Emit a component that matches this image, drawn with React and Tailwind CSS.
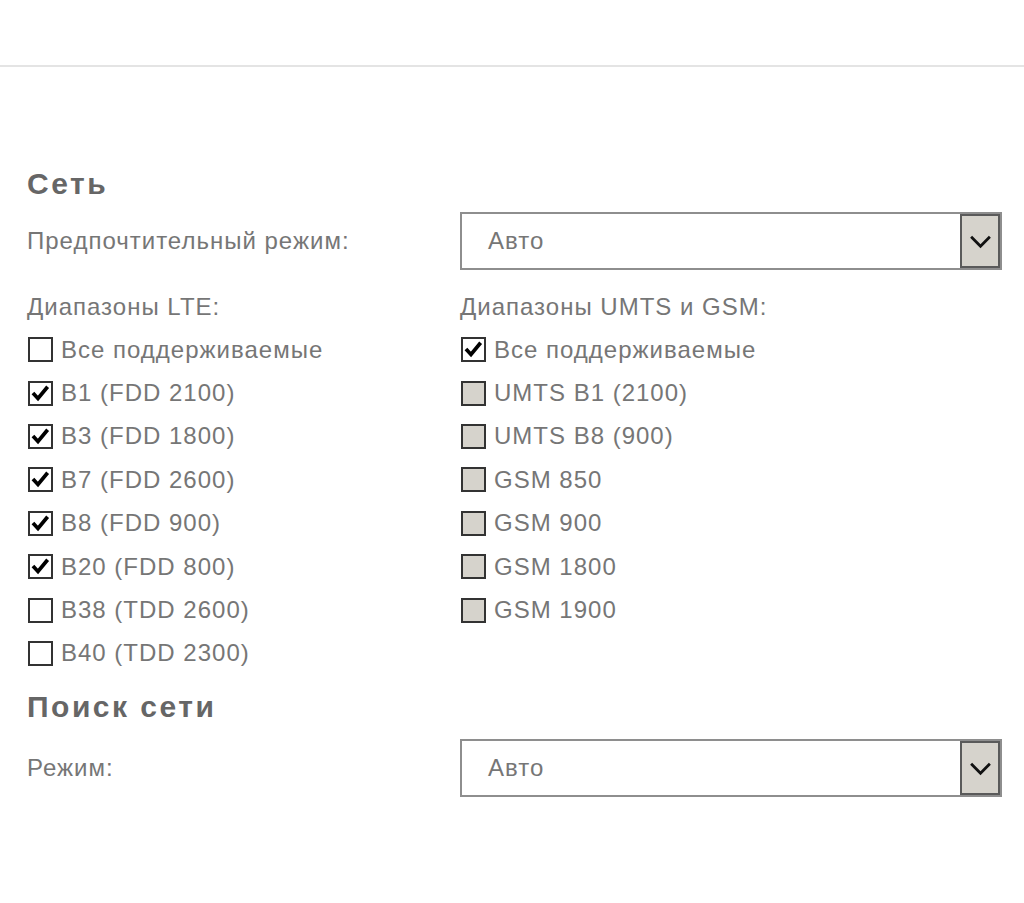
import React from 'react';

const font = "font-[family-name:Liberation_Sans,Arial,sans-serif]";

const CheckMark = () => (
    <svg viewBox="0 0 25 25" className="w-full h-full">
        <path d="M3.5 12 L9.5 18.5 L21 4.5" fill="none" stroke="#000" strokeWidth="4.4" strokeLinecap="butt" strokeLinejoin="miter" />
    </svg>
);

const Checkbox = ({ label, checked, disabled }) => (
    <div className="h-[43.4px] flex items-center">
        <div
            className={`w-[25px] h-[25px] ml-px border-2 border-[#333] shrink-0 ${disabled ? 'bg-[#d6d3cc]' : 'bg-white'}`}
        >
            {checked && <CheckMark />}
        </div>
        <span className="ml-[8px] text-[24px] tracking-[1px] text-[#767676] whitespace-nowrap leading-none">{label}</span>
    </div>
);

const Select = ({ value }) => (
    <div className="w-[542px] h-[58px] border-2 border-[#8e8e8e] bg-white flex items-stretch">
        <div className="flex-1 flex items-center pl-[26px] text-[24px] tracking-[1px] text-[#767676]">{value}</div>
        <div className="w-[40px] bg-[#d6d3cc] border-2 border-[#5a5a5a] flex items-center justify-center">
            <svg viewBox="0 0 24 16" className="w-[23px] h-[15px]">
                <path d="M2 3 L12 13 L22 3" fill="none" stroke="#111" strokeWidth="3" />
            </svg>
        </div>
    </div>
);

const Heading = ({ children }) => (
    <h2 className="h-[36px] flex items-center text-[30px] font-bold tracking-[2.5px] text-[#666]">{children}</h2>
);

const lte = [
    { label: 'Все поддерживаемые', checked: false },
    { label: 'B1 (FDD 2100)', checked: true },
    { label: 'B3 (FDD 1800)', checked: true },
    { label: 'B7 (FDD 2600)', checked: true },
    { label: 'B8 (FDD 900)', checked: true },
    { label: 'B20 (FDD 800)', checked: true },
    { label: 'B38 (TDD 2600)', checked: false },
    { label: 'B40 (TDD 2300)', checked: false },
];

const umts = [
    { label: 'Все поддерживаемые', checked: true },
    { label: 'UMTS B1 (2100)', disabled: true },
    { label: 'UMTS B8 (900)', disabled: true },
    { label: 'GSM 850', disabled: true },
    { label: 'GSM 900', disabled: true },
    { label: 'GSM 1800', disabled: true },
    { label: 'GSM 1900', disabled: true },
];

export default function App() {
    return (
        <div className={`w-[1024px] h-[903px] bg-white overflow-hidden ${font}`}>
            <div className="h-[67px] border-b-2 border-[#e4e4e4]" />

            <div className="pl-[27px] pt-[98px]">
                <Heading>Сеть</Heading>

                <div className="mt-[11px] flex items-center">
                    <div className="w-[433px] text-[24px] tracking-[1px] text-[#767676]">Предпочтительный режим:</div>
                    <Select value="Авто" />
                </div>

                <div className="mt-[16px] flex">
                    <div className="w-[433px]">
                        <div className="h-[42px] flex items-center text-[24px] tracking-[1px] text-[#767676]">Диапазоны LTE:</div>
                        {lte.map(b => (
                            <Checkbox key={b.label} {...b} />
                        ))}
                    </div>
                    <div>
                        <div className="h-[42px] flex items-center text-[24px] tracking-[1px] text-[#767676]">Диапазоны UMTS и GSM:</div>
                        {umts.map(b => (
                            <Checkbox key={b.label} {...b} />
                        ))}
                    </div>
                </div>

                <div className="mt-[13px]">
                    <Heading>Поиск сети</Heading>
                </div>

                <div className="mt-[15px] flex items-center">
                    <div className="w-[433px] text-[24px] tracking-[1px] text-[#767676]">Режим:</div>
                    <Select value="Авто" />
                </div>
            </div>
        </div>
    );
}
